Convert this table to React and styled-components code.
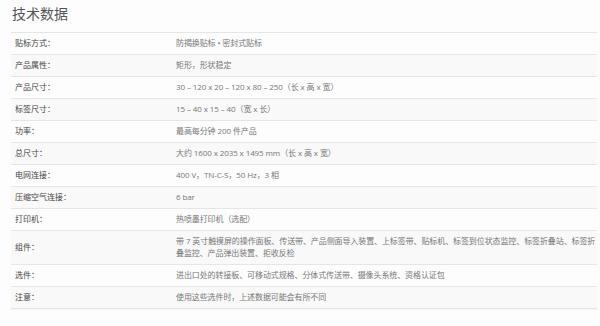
import React from 'react';
import styled, {createGlobalStyle} from 'styled-components';

const Global = createGlobalStyle`
  html, body {
    margin: 0;
    padding: 0;
    background: #fdfdfd;
  }
  body {
    font-family: "Open Sans", "Noto Sans CJK SC", sans-serif;
  }
`

const Page = styled.section`
  width: 600px;
  height: 326px;
  padding: 0 3px 0 11px;
  box-sizing: border-box;
  overflow: hidden;
`

const Title = styled.h2`
  margin: 0;
  padding: 5px 0 0 1px;
  height: 32px;
  box-sizing: border-box;
  font-size: 14px;
  font-weight: 400;
  line-height: 18px;
  color: #555;
`

const Table = styled.div`
  border-top: 1px solid #e6e6e6;
  display: flex;
  flex-direction: column;
`

const Row = styled.div`
  display: grid;
  grid-template-columns: 165px 1fr;
  border-bottom: 1px solid #e6e6e6;
  background: ${p => p.$shade ? '#f9f9f9' : '#fdfdfd'};
  box-shadow: 0 1px 1px rgba(0, 0, 0, 0.03);
`

const Label = styled.div`
  display: flex;
  align-items: center;
  padding: 4px 4px 5px 4px;
  font-size: 8px;
  line-height: 12px;
  color: #444;
`

const Value = styled.div`
  padding: 4px 0 5px 0;
  font-size: 8px;
  letter-spacing: -0.1px;
  line-height: 12px;
  color: #777;
`

const data = [
  ['贴标方式：', '防揭换贴标 • 密封式贴标'],
  ['产品属性：', '矩形，形状稳定'],
  ['产品尺寸：', '30 – 120 x 20 – 120 x 80 – 250（长 x 高 x 宽）'],
  ['标签尺寸：', '15 – 40 x 15 – 40（宽 x 长）'],
  ['功率：', '最高每分钟 200 件产品'],
  ['总尺寸：', '大约 1600 x 2035 x 1495 mm（长 x 高 x 宽）'],
  ['电网连接：', '400 V，TN-C-S，50 Hz，3 相'],
  ['压缩空气连接：', '6 bar'],
  ['打印机：', '热喷墨打印机（选配）'],
  ['组件：', '带 7 英寸触摸屏的操作面板、传送带、产品侧面导入装置、上标签带、贴标机、标签到位状态监控、标签折叠站、标签折叠监控、产品弹出装置、拒收反检'],
  ['选件：', '进出口处的转接板、可移动式规格、分体式传送带、摄像头系统、资格认证包'],
  ['注意：', '使用这些选件时，上述数据可能会有所不同'],
];

export default function App() {
  return (
    <>
      <Global />
      <Page>
        <Title>技术数据</Title>
        <Table>
          {data.map(([k, v], i) => (
            <Row key={k} $shade={i % 2 === 1}>
              <Label>{k}</Label>
              <Value>{v}</Value>
            </Row>
          ))}
        </Table>
      </Page>
    </>
  );
}
